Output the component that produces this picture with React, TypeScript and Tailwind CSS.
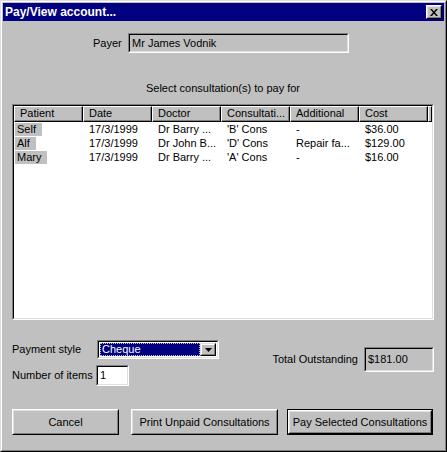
import React from "react";

const rows = [
  { patient: "Self", date: "17/3/1999", doctor: "Dr Barry ...", cons: "'B' Cons", extra: "-", cost: "$36.00" },
  { patient: "Alf", date: "17/3/1999", doctor: "Dr John B...", cons: "'D' Cons", extra: "Repair fa...", cost: "$129.00" },
  { patient: "Mary", date: "17/3/1999", doctor: "Dr Barry ...", cons: "'A' Cons", extra: "-", cost: "$16.00" },
];

const headers = ["Patient", "Date", "Doctor", "Consultati...", "Additional", "Cost"];

// sunken 2px field border (win95)
function Sunken({ className, inner, children }: { className?: string; inner?: string; children?: React.ReactNode }) {
  return (
    <div className={`border border-t-[#808080] border-l-[#808080] border-b-white border-r-white ${className ?? ""}`}>
      <div className={`h-full w-full border border-t-black border-l-black border-b-[#dfdfdf] border-r-[#dfdfdf] ${inner ?? ""}`}>
        {children}
      </div>
    </div>
  );
}

function Button({ label, width, isDefault }: { label: string; width: string; isDefault?: boolean }) {
  const btn = (
    <div className="h-full w-full border border-t-white border-l-white border-b-black border-r-black">
      <div className="h-full w-full border border-t-[#dfdfdf] border-l-[#dfdfdf] border-b-[#808080] border-r-[#808080] flex items-center justify-center">
        {label}
      </div>
    </div>
  );
  return (
    <div className={`h-[26px] ${width} ${isDefault ? "border border-black" : ""}`}>{btn}</div>
  );
}

export default function App() {
  return (
    <div
      className="w-[447px] h-[452px] bg-[#c0c0c0] text-black text-[11px] leading-[13px] border border-t-[#dfdfdf] border-l-[#dfdfdf] border-b-black border-r-black"
      style={{ fontFamily: '"Liberation Sans", Arial, sans-serif' }}
    >
      <div className="h-full w-full border border-t-white border-l-white border-b-[#808080] border-r-[#808080] p-px flex flex-col">
        {/* Title bar */}
        <div className="h-[18px] bg-[#000080] flex items-center justify-between pl-[2px] pr-[2px]">
          <span className="text-white font-bold text-[12px]">Pay/View account...</span>
          <div className="w-[16px] h-[14px] bg-[#c0c0c0] border border-t-white border-l-white border-b-black border-r-black">
            <div className="h-full w-full border border-t-[#dfdfdf] border-l-[#dfdfdf] border-b-[#808080] border-r-[#808080] flex items-center justify-center">
              <svg width="8" height="7" viewBox="0 0 8 7">
                <path d="M0 0h2l2 2.5L6 0h2L5 3.5 8 7H6L4 4.5 2 7H0l3-3.5z" fill="black" />
              </svg>
            </div>
          </div>
        </div>

        {/* Body */}
        <div className="flex-1 flex flex-col pl-[9px] pr-[10px]">
          <div className="flex items-center mt-[12px] pl-[81px]">
            <span className="w-[29px]">Payer</span>
            <Sunken className="ml-[6px] w-[221px] h-[20px]" inner="flex items-center pl-[2px]">
              Mr James Vodnik
            </Sunken>
          </div>

          <div className="mt-[29px] text-center">Select consultation(s) to pay for</div>

          <Sunken className="mt-[9px] h-[216px]" inner="bg-white flex flex-col">
            <div className="flex h-[16px]">
              {headers.map((h) => (
                <div
                  key={h}
                  className="w-[69px] h-full border border-t-white border-l-white border-b-black border-r-black bg-[#c0c0c0]"
                >
                  <div className="h-full border-b border-r border-b-[#808080] border-r-[#808080] flex items-center pl-[5px]">
                    {h}
                  </div>
                </div>
              ))}
              <div className="flex-1 h-full border border-t-white border-l-white border-b-black border-r-black bg-[#c0c0c0]" />
            </div>
            {rows.map((r) => (
              <div key={r.patient} className="flex h-[14px] items-center">
                <div className="w-[69px] pl-px">
                  <span className="bg-[#c0c0c0] pl-[2px] pr-[6px] inline-block h-[13px]">{r.patient}</span>
                </div>
                <div className="w-[69px] pl-[6px]">{r.date}</div>
                <div className="w-[69px] pl-[6px]">{r.doctor}</div>
                <div className="w-[69px] pl-[6px]">{r.cons}</div>
                <div className="w-[69px] pl-[6px]">{r.extra}</div>
                <div className="w-[69px] pl-[6px]">{r.cost}</div>
              </div>
            ))}
          </Sunken>

          {/* Payment area */}
          <div className="flex mt-[20px]">
            <div className="flex flex-col">
              <div className="flex items-center h-[19px]">
                <span className="w-[85px]">Payment style</span>
                <Sunken className="w-[122px] h-[19px]" inner="bg-white flex p-px">
                  <div className="flex-1 bg-[#000080] text-white border border-dotted border-[#c0c0c0] flex items-center pl-px">
                    Cheque
                  </div>
                  <div className="w-[16px] h-full border border-t-[#dfdfdf] border-l-[#dfdfdf] border-b-black border-r-black bg-[#c0c0c0]">
                    <div className="h-full border border-t-white border-l-white border-b-[#808080] border-r-[#808080] flex items-center justify-center">
                      <svg width="7" height="4" viewBox="0 0 7 4">
                        <path d="M0 0h7L3.5 4z" fill="black" />
                      </svg>
                    </div>
                  </div>
                </Sunken>
              </div>
              <div className="flex items-center h-[21px] mt-[6px]">
                <span className="w-[84px]">Number of items</span>
                <Sunken className="w-[33px] h-[21px]" inner="bg-white flex items-center pl-[2px]">
                  1
                </Sunken>
              </div>
            </div>
            <div className="flex-1 flex items-center justify-end mt-[7px] self-start">
              <span>Total Outstanding</span>
              <Sunken className="ml-[6px] w-[70px] h-[25px]" inner="flex items-center pl-[2px]">
                $181.00
              </Sunken>
            </div>
          </div>

          {/* Buttons */}
          <div className="flex mt-[23px]">
            <Button label="Cancel" width="w-[107px]" />
            <div className="ml-[12px]">
              <Button label="Print Unpaid Consultations" width="w-[147px]" />
            </div>
            <div className="ml-[9px]">
              <Button label="Pay Selected Consultations" width="w-[146px]" isDefault />
            </div>
          </div>
        </div>
      </div>
    </div>
  );
}
